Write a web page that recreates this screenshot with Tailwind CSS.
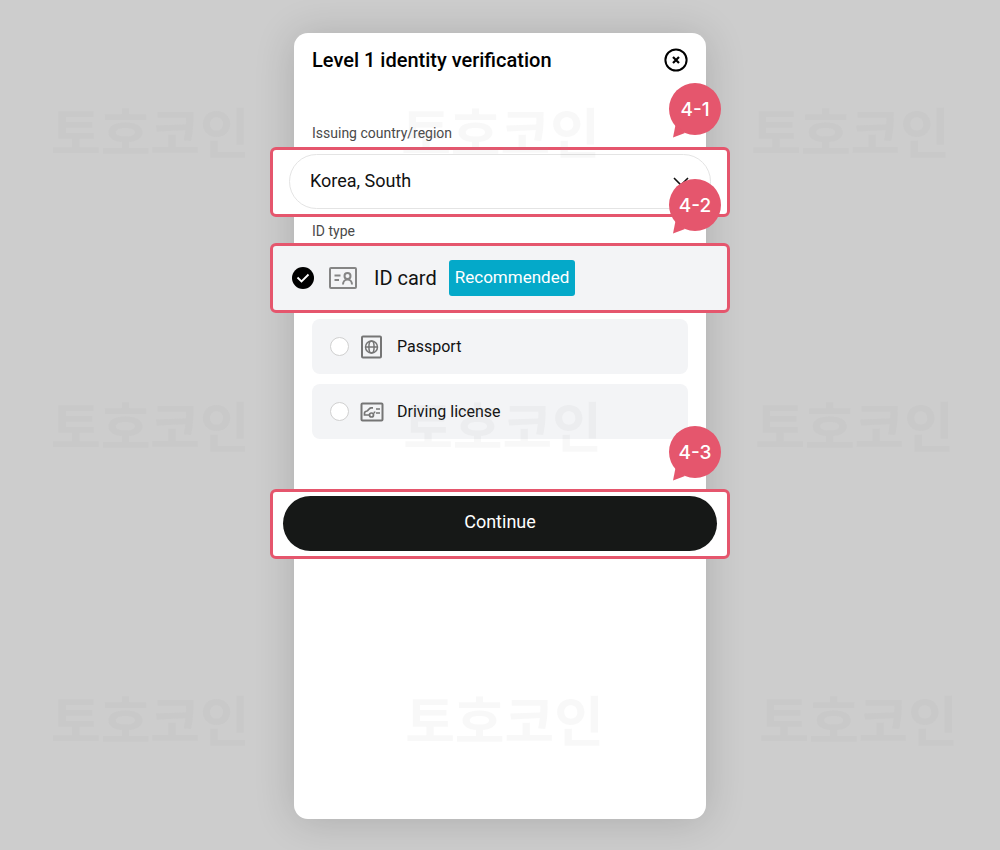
<!DOCTYPE html>
<html lang="en">
<head>
<meta charset="utf-8">
<meta name="viewport" content="width=device-width, initial-scale=1">
<title>Level 1 identity verification</title>
<script src="https://cdn.jsdelivr.net/npm/@tailwindcss/browser@4"></script>
</head>
<body class="relative min-h-screen overflow-x-hidden bg-[#cdcdcd] px-8 py-[33px] font-['Roboto',sans-serif] text-[#121212]">

<main class="mx-auto min-h-[786px] max-w-[412px] rounded-[14px] bg-white px-[18px] shadow-[0_2px_40px_rgba(0,0,0,0.16)]">
  <header class="flex h-[54px] items-center justify-between">
    <h1 class="text-[20px] leading-6 font-medium text-black">Level 1 identity verification</h1>
    <button type="button" aria-label="Close">
      <svg class="size-6" viewBox="0 0 24 24" fill="none" stroke="#000">
        <circle cx="12" cy="12" r="10.6" stroke-width="2"/>
        <path d="M9 9l6 6M15 9l-6 6" stroke-width="2.2"/>
      </svg>
    </button>
  </header>

  <form>
    <label for="country" class="mt-9 block text-[14px] leading-5 text-[#4a4a4a]">Issuing country/region</label>
    <div class="relative -mx-[42px] mt-1 h-[70px] rounded-md border-3 border-[#e5566d] bg-white px-4 py-1">
      <div class="relative">
        <select id="country" class="block h-[55px] w-full appearance-none rounded-full border border-[#e4e4e4] bg-white px-5 pb-0.5 text-[18px] text-[#121212]">
          <option>Korea, South</option>
        </select>
        <svg class="pointer-events-none absolute top-5 right-[22px] size-4" viewBox="0 0 16 16" fill="none" stroke="#111" stroke-width="1.6"><path d="M1 4l7 7 7-7"/></svg>
      </div>
      <div class="absolute -top-[67px] right-1.5 flex h-[52px] w-[52px] items-center justify-center">
        <svg class="absolute top-0 left-0 h-[55px] w-[52px]" viewBox="0 0 52 55" fill="#e5566d"><circle cx="26" cy="26" r="26"/><path d="M6.500 42L4 54.500L16 50Z"/></svg>
        <span class="relative pt-0.5 font-['Inter',sans-serif] text-[19px] font-medium text-white">4-1</span>
      </div>
    </div>

    <fieldset>
      <legend class="block h-[26px] pt-1 text-[14px] leading-5 text-[#4a4a4a]">ID type</legend>
      <div class="relative -mx-[42px] h-[70px] rounded-md border-3 border-[#e5566d] bg-[#f3f4f6]">
        <label class="flex h-full items-center pl-[19px]">
          <span class="relative size-[22px]">
            <input type="radio" name="id-type" value="card" checked class="block size-[22px] appearance-none rounded-full bg-black">
            <svg class="pointer-events-none absolute inset-0 size-[22px]" viewBox="0 0 22 22" fill="none" stroke="#fff" stroke-width="1.8"><path d="M5.500 10.500l4 4 7-7"/></svg>
          </span>
          <svg class="ml-[15px] h-[22px] w-7" viewBox="0 0 28 22" fill="none" stroke="#858585" stroke-width="2">
            <rect x="1" y="1" width="26" height="20" rx="1"/>
            <path d="M5.500 8.500h6M5.500 13h4.500"/>
            <circle cx="18.500" cy="9" r="3"/>
            <path d="M14 17.500c0-3 2-5 4.500-5s4.500 2 4.500 5"/>
          </svg>
          <span class="ml-[17px] text-[20px]">ID card</span>
          <span class="ml-3 flex h-9 items-center rounded-[3px] bg-[#04a9c9] px-1.5 text-[17px] text-white">Recommended</span>
        </label>
        <div class="absolute -top-[67px] right-1.5 flex h-[52px] w-[52px] items-center justify-center">
          <svg class="absolute top-0 left-0 h-[55px] w-[52px]" viewBox="0 0 52 55" fill="#e5566d"><circle cx="26" cy="26" r="26"/><path d="M6.500 42L4 54.500L16 50Z"/></svg>
          <span class="relative pt-0.5 font-['Inter',sans-serif] text-[19px] font-medium text-white">4-2</span>
        </div>
      </div>

      <label class="mt-1.5 flex h-[55px] items-center rounded-lg bg-[#f3f4f6] pl-[18px]">
        <input type="radio" name="id-type" value="passport" class="size-[19px] appearance-none rounded-full border border-[#d0d0d0] bg-white">
        <svg class="ml-[11px] h-6 w-6" viewBox="0 0 24 24" fill="none" stroke="#757575">
          <rect x="2" y="1.500" width="19" height="21" rx="1" stroke-width="2"/>
          <g stroke-width="1.500"><circle cx="11.500" cy="12" r="6"/><ellipse cx="11.500" cy="12" rx="2.600" ry="6"/><path d="M5.500 12h12"/></g>
        </svg>
        <span class="ml-[13px] text-[16px]">Passport</span>
      </label>

      <label class="mt-2.5 flex h-[55px] items-center rounded-lg bg-[#f3f4f6] pl-[18px]">
        <input type="radio" name="id-type" value="license" class="size-[19px] appearance-none rounded-full border border-[#d0d0d0] bg-white">
        <svg class="ml-[11px] h-6 w-6" viewBox="0 0 24 24" fill="none" stroke="#757575">
          <rect x="1.500" y="3.500" width="21" height="17" rx="1" stroke-width="2"/>
          <path d="M13 7.800h-2C9 8 8.500 10.500 7 11C5 11.500 4.500 11.800 4.500 13v2h5M13.500 13c.8 0 1.200-.5 1.200-1.500" stroke-width="1.700"/>
          <circle cx="11.500" cy="15" r="2" stroke-width="1.700"/>
          <path d="M16 9h4M16 13h4" stroke-width="1.700"/>
        </svg>
        <span class="ml-[13px] text-[16px]">Driving license</span>
      </label>
    </fieldset>

    <div class="relative -mx-[42px] mt-[50px] h-[70px] rounded-md border-3 border-[#e5566d] bg-white px-2.5 py-1">
      <button type="submit" class="block h-[55px] w-full rounded-full bg-[#161817] pb-1 text-[18px] text-white">Continue</button>
      <div class="absolute -top-[66px] right-1.5 flex h-[52px] w-[52px] items-center justify-center">
        <svg class="absolute top-0 left-0 h-[55px] w-[52px]" viewBox="0 0 52 55" fill="#e5566d"><circle cx="26" cy="26" r="26"/><path d="M6.500 42L4 54.500L16 50Z"/></svg>
        <span class="relative pt-0.5 font-['Inter',sans-serif] text-[19px] font-medium text-white">4-3</span>
      </div>
    </div>
  </form>
</main>

<div lang="ko" aria-hidden="true" class="pointer-events-none absolute inset-x-0 top-[99px] flex flex-col gap-[230px] pl-[51px] font-['Noto_Sans_CJK_KR',sans-serif] text-[54px] leading-[64px] font-bold text-[#999999]/7">
  <div class="flex justify-between pr-[50px]"><span>토호코인</span><span>토호코인</span><span>토호코인</span></div>
  <div class="flex justify-between pr-[46px]"><span>토호코인</span><span>토호코인</span><span>토호코인</span></div>
  <div class="flex justify-between pr-[42px]"><span>토호코인</span><span>토호코인</span><span>토호코인</span></div>
</div>
</body>
</html>
